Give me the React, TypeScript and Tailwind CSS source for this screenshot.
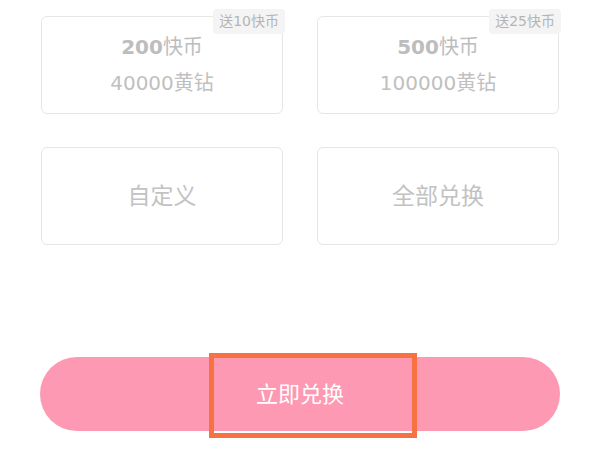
import * as React from "react";

interface OptionCardProps {
  amount?: string;
  unit?: string;
  subtitle?: string;
  label?: string;
  badge?: string;
}

function OptionCard({ amount, unit, subtitle, label, badge }: OptionCardProps) {
  return (
    <div className="relative flex h-[98px] flex-col items-center justify-center rounded-[6px] border border-[#e6e6e6] bg-white">
      {badge && (
        <span className="absolute -top-[8px] -right-[3px] rounded-[4px] bg-[#f4f4f4] px-[6px] py-[3px] text-[14px] leading-[19px] text-[#b4b4b4]">
          {badge}
        </span>
      )}
      {label ? (
        <span className="text-[23px] text-[#c2c2c2]">{label}</span>
      ) : (
        <>
          <span className="text-[20px] leading-[28px] text-[#bdbdbd]">
            <span className="font-bold">{amount}</span>
            {unit}
          </span>
          <span className="mt-[8px] text-[20px] leading-[28px] text-[#c0c0c0]">{subtitle}</span>
        </>
      )}
    </div>
  );
}

export default function App() {
  return (
    <div
      className="relative h-[450px] w-[600px] overflow-hidden bg-white"
      style={{ fontFamily: '"DejaVu Sans", "Noto Sans CJK SC", sans-serif' }}
    >
      <div className="grid grid-cols-2 gap-x-[34px] gap-y-[33px] px-[41px] pt-[16px]">
        <OptionCard amount="200" unit="快币" subtitle="40000黄钻" badge="送10快币" />
        <OptionCard amount="500" unit="快币" subtitle="100000黄钻" badge="送25快币" />
        <OptionCard label="自定义" />
        <OptionCard label="全部兑换" />
      </div>

      <div className="mt-[112px] px-[40px]">
        <button className="flex h-[74px] w-full items-center justify-center rounded-full bg-[#fd99b2] text-[22px] text-white">
          立即兑换
        </button>
      </div>

      {/* annotation highlight */}
      <div className="absolute left-[209px] top-[353px] h-[85px] w-[208px] border-[5px] border-[#f87143]" />
    </div>
  );
}
